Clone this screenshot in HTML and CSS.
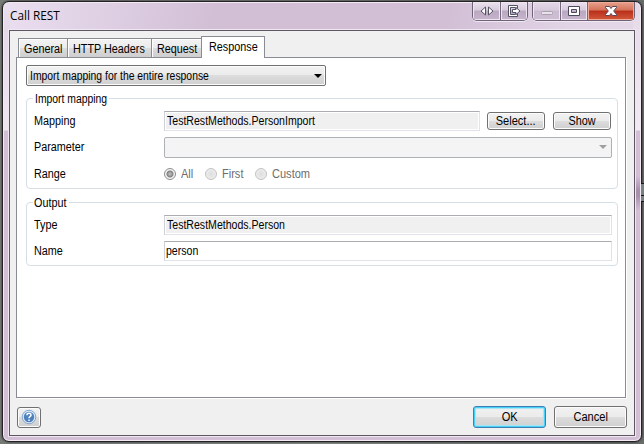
FILE: index.html
```html
<!DOCTYPE html>
<html lang="en">
<head>
<meta charset="utf-8">
<title>Call REST</title>
<link rel="stylesheet" href="styles.css">
</head>
<body>
<div class="window">
  <header class="titlebar">
    <span class="title">Call REST</span>
    <div class="controls">
      <div class="control-group">
        <span class="control"><svg width="16" height="14" viewBox="0 0 16 14"><path d="M6.500 3v8L2 7zM9.500 3v8L14 7z" fill="#fff" stroke="#555465"/></svg></span>
        <span class="control"><svg width="16" height="14" viewBox="0 0 16 14"><path d="M2.500 1.500h9v3h-2v-1h-5v7h5v-1h2v3h-9z" fill="#fff" stroke="#555465"/><path d="M6.500 5.500h3.500v-2L14 7l-4 3.500v-2H6.500z" fill="#fff" stroke="#555465"/></svg></span>
      </div>
      <div class="control-group caption">
        <span class="control minimize"><svg width="16" height="14" viewBox="0 0 16 14"><rect x="2.500" y="7.500" width="11" height="3" rx="1" fill="#e9e2ea" stroke="#aaa0ae"/></svg></span>
        <span class="control"><svg width="16" height="14" viewBox="0 0 16 14"><path d="M2.500 2.500h11v9h-11zM5.500 5.500h5v3h-5z" fill="#fff" fill-rule="evenodd" stroke="#4c4a5d"/></svg></span>
        <span class="control close"><svg width="16" height="14" viewBox="0 0 16 14"><path d="M2.500 2.500h4L8 4.500l1.500-2h4v1L10.700 7l2.800 3.500v1h-4L8 9.500l-1.500 2h-4v-1L5.300 7 2.500 3.500z" fill="#fff" stroke="#5b4554"/></svg></span>
      </div>
    </div>
  </header>
  <main class="client">
    <nav class="tabs">
      <span class="tab general"><span class="label">General</span></span>
      <span class="tab headers"><span class="label">HTTP Headers</span></span>
      <span class="tab request"><span class="label">Request</span></span>
      <span class="tab active"><span class="label">Response</span></span>
    </nav>
    <section class="panel">
      <div class="dropdown"><span class="label tight">Import mapping for the entire response</span><i class="arrow"></i></div>
      <section class="group import">
        <h2><span class="label tight">Import mapping</span></h2>
        <div class="row"><span class="name"><span class="label">Mapping</span></span><div class="field readonly short"><span class="label path">TestRestMethods.PersonImport</span></div><button class="button small"><span class="label wide">Select...</span></button><button class="button small show"><span class="label">Show</span></button></div>
        <div class="row second"><span class="name"><span class="label">Parameter</span></span><div class="combo"><i class="arrow"></i></div></div>
        <div class="row third"><span class="name"><span class="label">Range</span></span><div class="radios"><span class="radio all"><i class="dot checked"></i><span class="label wide">All</span></span><span class="radio first"><i class="dot"></i><span class="label wide">First</span></span><span class="radio"><i class="dot"></i><span class="label wide">Custom</span></span></div></div>
      </section>
      <section class="group output">
        <h2><span class="label">Output</span></h2>
        <div class="row"><span class="name"><span class="label">Type</span></span><div class="field readonly"><span class="label path">TestRestMethods.Person</span></div></div>
        <div class="row second"><span class="name"><span class="label">Name</span></span><div class="field editable"><span class="label path">person</span></div></div>
      </section>
    </section>
    <footer class="actions">
      <button class="button help" aria-label="Help"><svg width="16" height="16" viewBox="0 0 16 16"><circle cx="8" cy="8" r="6.800" fill="#dce9f6" stroke="#86a6cb"/><circle cx="8" cy="8" r="5.200" fill="#4d82bf"/><path d="M5.900 6.300c0-3 4.300-2.700 4.100-.2C9.900 7.400 8 7.500 8 9.200M8 10.400v1.500" fill="none" stroke="#fff" stroke-width="1.500"/></svg></button>
      <button class="button large ok"><span class="label wide">OK</span></button>
      <button class="button large"><span class="label wide">Cancel</span></button>
    </footer>
  </main>
</div>
<i class="backdrop-mark"></i>
</body>
</html>
```
FILE: styles.css
```css
* { box-sizing: border-box; }
body {
  margin: 0;
  height: 444px;
  padding: 1px 1px 2px 2px;
  overflow: hidden;
  background: linear-gradient(90deg, #777b78, #858985 50%, #686c69);
  font: 12px/14px "Liberation Sans", Arial, sans-serif;
  color: #000;
}
.window {
  height: 441px;
  width: 640px;
  border: 1px solid #242124;
  border-radius: 7px;
  padding: 0 6px 5px 6px;
  box-shadow: inset 0 0 0 1px #f3eaf4, 0 0 2px #111;
  background:
    linear-gradient(#eadff0, #e5d9e8 28px, #eee7f0 128px, #d2bfd6 129px, #d2bfd6) left top / 7px 441px no-repeat,
    linear-gradient(#e5d9e8, #f1eaf2 128px, #d2bfd6 129px, #d2bfd6 174px, #a991ae 188px, #a991ae 194px, #d2bfd6 209px) right top / 8px 441px no-repeat,
    linear-gradient(#d2bfd6, #d2bfd6) 0 100% / 100% 10px no-repeat,
    linear-gradient(100deg, #eadff0 0, #dfd0e4 100px, #d2bfd6 210px, #d2bfd6 440px, #e2d6e6 570px, #e5d9e8);
}
.titlebar { height: 27px; display: flex; justify-content: space-between; }
.title {
  font: 12px/16px "Open Sans", "Noto Sans", sans-serif;
  padding: 6px 0 0 1px;
  transform: scaleX(.98);
  transform-origin: left;
}
.controls { display: flex; gap: 4px; height: 19px; }
.control-group {
  display: flex;
  border: 1px solid #6e6377;
  border-top: 0;
  border-radius: 0 0 5px 5px;
  overflow: hidden;
  height: 19px;
  box-shadow: 0 1px #f1e8f4;
}
.control {
  width: 27px;
  height: 18px;
  display: flex;
  align-items: center;
  justify-content: center;
  background: linear-gradient(#ebe2ee, #d8cadd 45%, #b9a8c0 50%, #c6b5cc);
  box-shadow: inset 0 0 0 1px #eee5f1;
}
.control + .control { border-left: 1px solid #74687c; }
.caption .minimize { background: linear-gradient(#e4d8e7, #d8cadd 45%, #cbbbd0 50%, #cebed3); }
.caption .control.close {
  width: 47px;
  background: linear-gradient(#e8a18d, #d4735b 45%, #b92f19 50%, #d2593c);
  box-shadow: inset 0 0 0 1px #efab98;
}
.client {
  width: 626px;
  height: 406px;
  margin-top: 1px;
  border: 1px solid #5e5662;
  box-shadow: 0 0 0 1px #efe7f1;
  background: #f0f0f0;
  padding: 5px 8px 0 6px;
}
.label { display: inline-block; white-space: nowrap; transform: scaleX(.9); transform-origin: left; flex: none; }
.tight { transform: scaleX(.865); }
.path { transform: scaleX(.88); }
.wide { transform: scaleX(.92); }
.tabs { height: 21px; display: flex; align-items: flex-end; padding-left: 2px; }
.tab {
  height: 19px;
  padding: 3px 0 0 5px;
  border: 1px solid #898c95;
  border-bottom: 0;
  background: linear-gradient(#f3f3f3, #ebebeb 50%, #dcdcdc 51%, #cfcfcf);
  box-shadow: inset 1px 1px #fff;
}
.general { width: 50px; }
.headers { width: 85px; margin-left: -1px; }
.request { width: 51px; margin-left: -1px; }
.tab.active { width: 64px; height: 22px; padding: 3px 0 0 7px; margin: 0 0 -1px -1px; background: #fff; position: relative; z-index: 1; }
.panel { width: 610px; height: 341px; border: 1px solid #898c95; background: #fff; padding: 7px 8px 0 9px; box-shadow: 1px 1px #fff; }
.dropdown {
  width: 300px;
  height: 21px;
  border: 1px solid #707070;
  border-radius: 2px;
  padding: 0 3px;
  display: flex;
  align-items: center;
  justify-content: space-between;
  background: linear-gradient(#f2f2f2, #ebebeb 49%, #dddddd 50%, #cfcfcf);
  box-shadow: inset 0 0 0 1px #fcfcfc;
}
.arrow { width: 0; height: 0; border: 4px solid transparent; border-top-color: #000; border-bottom: 0; flex: none; }
.group { width: 592px; border: 1px solid #d5dfe5; border-radius: 4px; padding: 0 5px 0 7px; }
.group h2 { font: inherit; margin: -7px 0 0 -1px; width: 76px; height: 14px; background: #fff; padding-left: 2px; }
.import { margin-top: 12px; height: 91px; }
.output { margin-top: 13px; height: 64px; }
.output h2 { width: 36px; padding-left: 1px; }
.row { display: flex; height: 20px; margin-top: 5px; align-items: center; }
.row.second { margin-top: 6px; }
.row.third { margin-top: 7px; }
.name { width: 130px; flex: none; }
.field { width: 448px; height: 20px; border: 1px solid #e2e3ea; border-top-color: #abadb3; border-left-color: #cfd0d8; padding: 2px 0 0 2px; flex: none; }
.short { width: 316px; }
.readonly { background: #f0f0f0; box-shadow: inset 0 0 0 1px #fff; }
.editable { padding-left: 1px; }
.combo { width: 448px; height: 21px; border: 1px solid #adb2b5; border-radius: 2px; background: #f4f4f4; display: flex; align-items: center; justify-content: flex-end; padding-right: 4px; }
.combo .arrow { border-top-color: #a0a0a0; }
.button {
  font: inherit;
  color: #000;
  padding: 0;
  border: 1px solid #707070;
  border-radius: 3px;
  display: flex;
  align-items: center;
  justify-content: center;
  background: linear-gradient(#f2f2f2, #ebebeb 49%, #dddddd 50%, #cfcfcf);
  box-shadow: inset 0 0 0 1px #fcfcfc;
}
.button .label { transform-origin: center; }
.small { width: 58px; height: 18px; margin-left: 7px; }
.show { margin-left: 8px; }
.radios { display: flex; color: #6d6d6d; }
.radio { display: flex; align-items: center; gap: 5px; }
.radio.all { width: 41px; }
.radio.first { width: 50px; }
.dot { width: 12px; height: 12px; border: 1px solid #c3c3c3; border-radius: 50%; background: radial-gradient(#ddd, #f3f3f3); }
.checked { border-color: #8d8d8d; background: radial-gradient(circle, #b5b5b5 0 1px, #7f7f7f 3px, #f5f5f5 4px); }
.actions { display: flex; align-items: center; width: 611px; padding: 8px 0 0 1px; }
.help { width: 24px; height: 21px; margin-right: auto; }
.large { width: 73px; height: 22px; }
.ok { margin-right: 8px; border-color: #3c7fb1; box-shadow: inset 0 0 0 1px #46d0fa, inset 0 0 1px 2px #a5e5f7; }
.backdrop-mark { position: absolute; left: 641px; top: 183px; width: 3px; height: 19px; border: 1px solid #151515; border-width: 1px 0; background: linear-gradient(#75827f 0 11px, #151515 11px 12px, #75827f 12px); }
```
